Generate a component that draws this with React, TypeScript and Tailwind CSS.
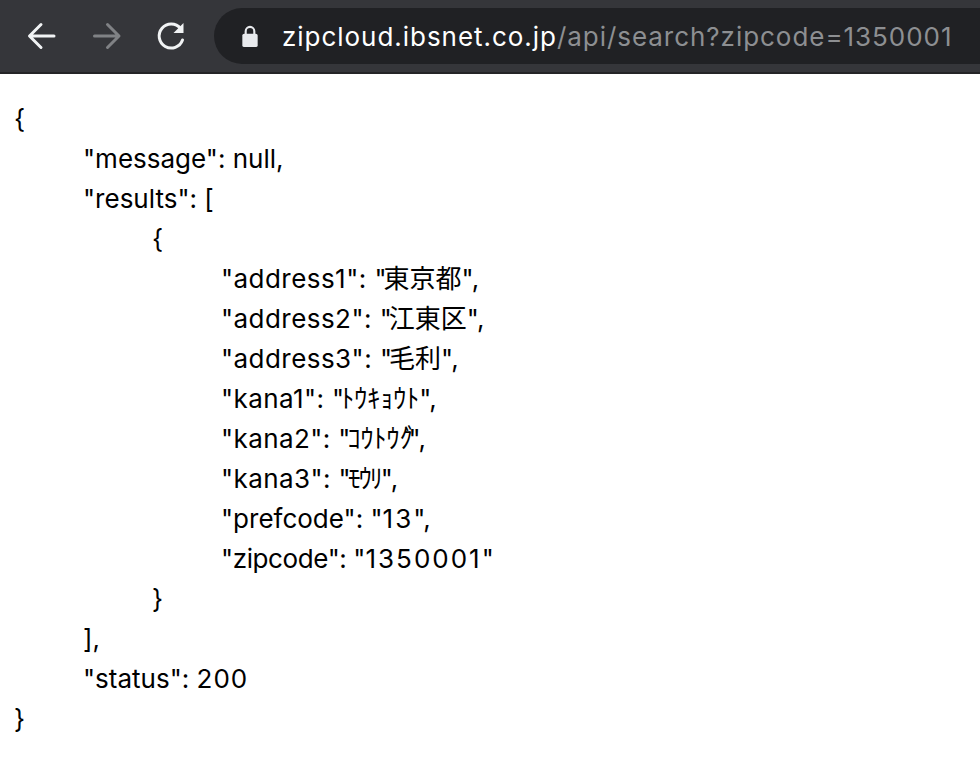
import type { ReactNode } from "react";

// quotes in the reference are much tighter than Inter's around Japanese text
const Jp = ({ children }: { children: ReactNode }) => (
  <>
    <span className="tracking-[-3px]">"</span>
    {children}
    <span className="tracking-[-2px]">"</span>,
  </>
);

const LINES: [number, ReactNode][] = [
  [0, "{"],
  [1, '"message": null,'],
  [1, '"results": ['],
  [2, "{"],
  [3, <><span className="tracking-[0.45px]">"address1": </span><Jp>東京都</Jp></>],
  [3, <><span className="tracking-[0.45px]">"address2": </span><Jp>江東区</Jp></>],
  [3, <><span className="tracking-[0.45px]">"address3": </span><Jp>毛利</Jp></>],
  [3, <><span className="tracking-[0.4px]">"kana1": </span><Jp>ﾄｳｷｮｳﾄ</Jp></>],
  [3, <><span className="tracking-[0.4px]">"kana2": </span><Jp>ｺｳﾄｳｸ<span className="-ml-[8px] -mr-[9px]">ﾞ</span></Jp></>],
  [3, <><span className="tracking-[0.4px]">"kana3": </span><Jp><span className="tracking-[-2px]">ﾓｳﾘ</span></Jp></>],
  [3, <>"prefcode": "<span className="tracking-[2px]">13</span>",</>],
  [3, <><span className="tracking-[-0.4px]">"zipcode": </span>"<span className="tracking-[2px]">1350001</span>"</>],
  [2, "}"],
  [1, "],"],
  [1, <>"status": <span className="tracking-[1px]">200</span></>],
  [0, "}"],
];

const indentClass = ["pl-0", "pl-[69px]", "pl-[138px]", "pl-[207px]"];

export default function App() {
  return (
    <div className="h-[776px] w-[980px] overflow-hidden bg-white font-['Inter','Noto_Sans_CJK_JP',sans-serif]">
      {/* Browser toolbar */}
      <div className="flex h-[74px] items-center border-b-2 border-[#242527] bg-[#35363a] pl-[27px]">
        <svg viewBox="0 0 32 32" className="h-8 w-8" fill="none" stroke="#f1f3f4" strokeWidth="3" strokeLinecap="round" strokeLinejoin="round">
          <path d="M27 16H3.500M14 4.500 2.500 16 14 27.500" />
        </svg>
        <svg viewBox="0 0 32 32" className="ml-[33px] h-8 w-8" fill="none" stroke="#808285" strokeWidth="3" strokeLinecap="round" strokeLinejoin="round">
          <path d="M2.500 16H26M15.500 4.500 27 16 15.500 27.500" />
        </svg>
        <svg viewBox="0 0 32 32" className="ml-[32px] h-8 w-8" fill="none">
          <path d="M24.500 8.500A12 12 0 1 0 26.500 20" stroke="#f1f3f4" strokeWidth="3" strokeLinecap="round" />
          <path d="M27.500 3V13H17.500Z" fill="#f1f3f4" />
        </svg>
        <div className="ml-[26px] flex h-14 flex-1 items-center rounded-l-full bg-[#202124] pl-[27px]">
          <svg viewBox="0 0 18 24" className="h-[23px] w-[18px] shrink-0" fill="none">
            <path d="M4.500 10V6.500a4.500 4.500 0 0 1 9 0V10" stroke="#e8eaed" strokeWidth="2.200" />
            <rect x="1" y="9" width="16" height="14" rx="2" fill="#e8eaed" />
          </svg>
          <span className="ml-[23px] whitespace-nowrap text-[26px] tracking-[0.96px] text-white">
            zipcloud.ibsnet.co.jp<span className="text-[#8d8f92]">/api/search?zipcode=1350001</span>
          </span>
        </div>
      </div>

      {/* JSON body */}
      <pre className="pl-[14px] pt-[25px] font-['Inter','Noto_Sans_CJK_JP',sans-serif] text-[26px] leading-[40px] text-black">
        {LINES.map(([depth, text], i) => (
          <div key={i} className={indentClass[depth]}>
            {text}
          </div>
        ))}
      </pre>
    </div>
  );
}
